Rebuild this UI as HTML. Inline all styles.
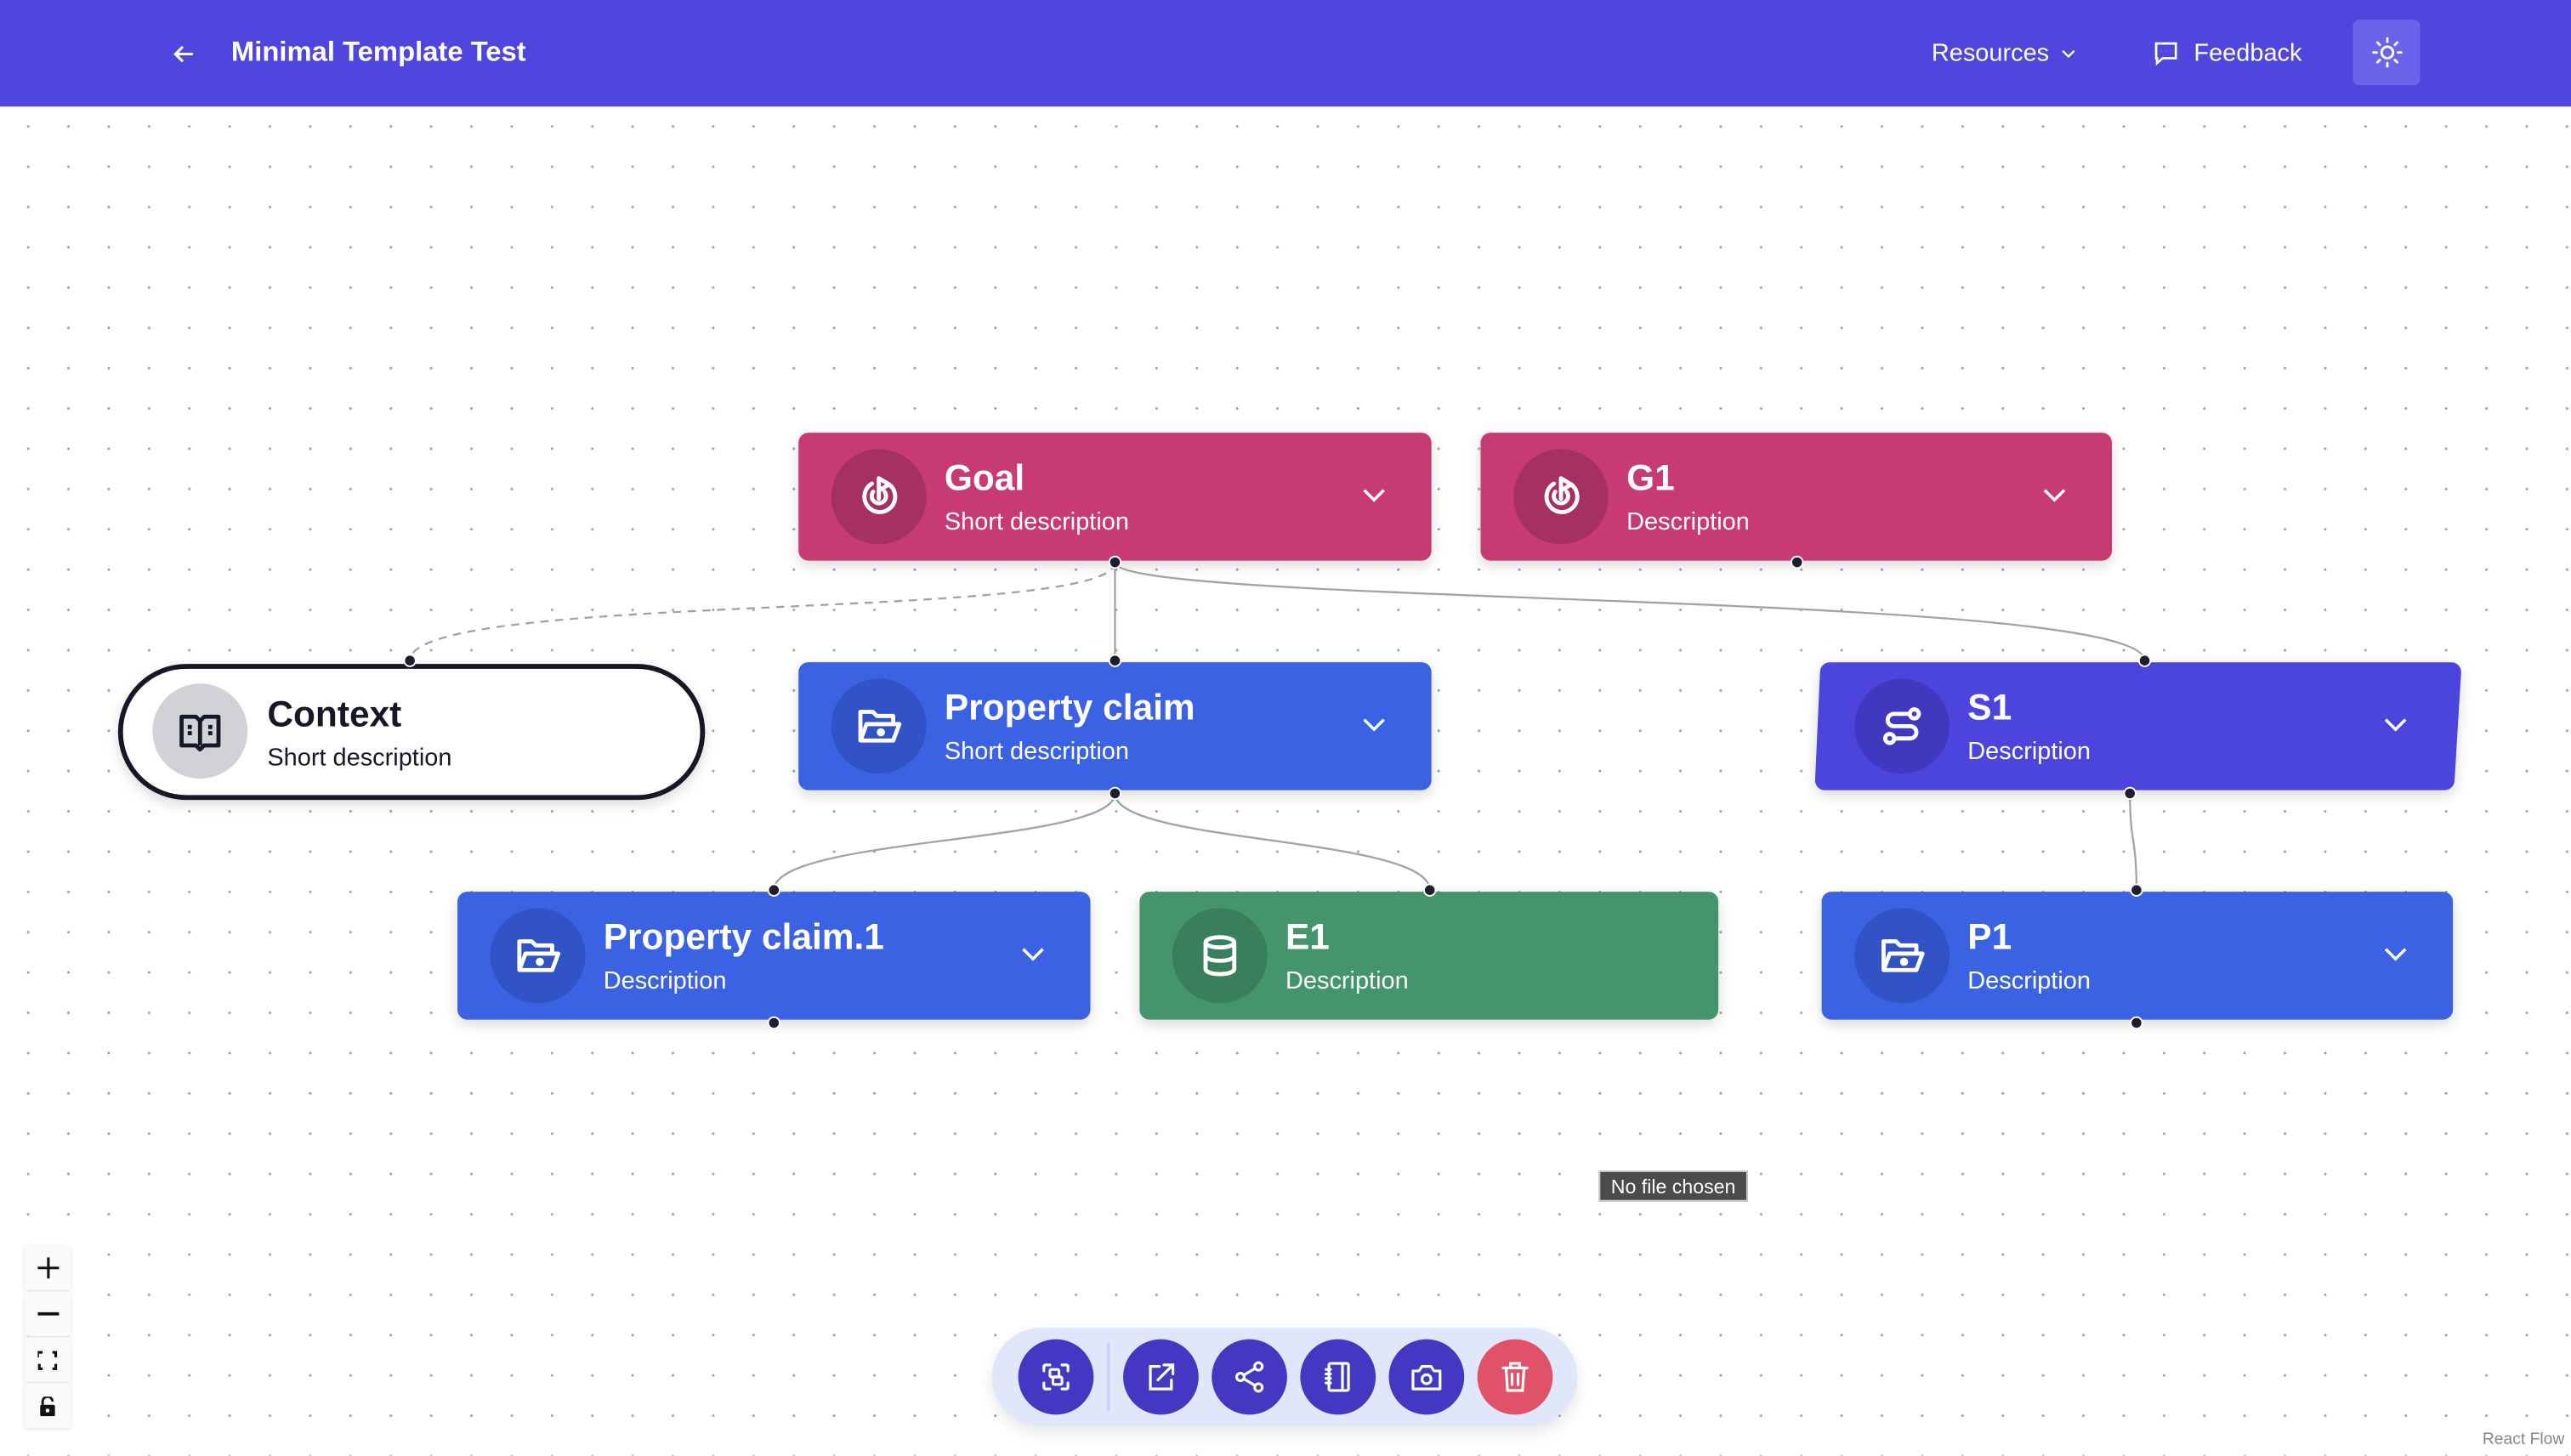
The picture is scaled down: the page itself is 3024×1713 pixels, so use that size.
<!DOCTYPE html>
<html><head><meta charset="utf-8"><style>
html,body{margin:0;padding:0;width:3024px;height:1712px;overflow:hidden;background:#fff;font-family:"Liberation Sans",sans-serif}
#w{position:absolute;left:0;top:0;width:1568px;height:888px;transform:scale(1.928571);transform-origin:0 0;overflow:hidden;
background-color:#fff;background-image:radial-gradient(circle,#9ca3af 0.7px,transparent 0.9px);background-size:24.58px 24.58px;background-position:4.9px -8.9px}
.hdr{position:absolute;left:0;top:0;width:1568px;height:65px;background:#4f46dd;color:#fff}
.hdr .t{position:absolute;top:22px;font-size:17px;font-weight:bold}
.hdr .m{position:absolute;top:24px;font-size:15px}
.node{position:absolute;height:78px;border-radius:6px;color:#fff;box-shadow:0 3px 8px rgba(0,0,0,.15)}
.ic{position:absolute;left:20px;top:10px;width:58px;height:58px;border-radius:50%;display:flex;align-items:center;justify-content:center}
.nt{position:absolute;left:89px;top:15px;font-size:22px;font-weight:bold}
.nd{position:absolute;left:89px;top:46px;font-size:15px}
.chev{position:absolute;right:28px;top:34px}
.h{position:absolute;width:6px;height:6px;border-radius:50%;background:#1e1e2e;border:1px solid #fff;margin:-4px 0 0 -4px}
.tb{position:absolute;left:605px;top:810px;width:357px;height:60px;border-radius:30px;background:#e0e7fb;box-shadow:0 4px 10px rgba(0,0,0,.1)}
.b{position:absolute;top:7px;width:46px;height:46px;border-radius:50%;background:#4238c2;display:flex;align-items:center;justify-content:center}
.ctl{position:absolute;left:15px;width:28px;height:27px;background:#fafafa;box-shadow:0 1px 3px rgba(0,0,0,.12);display:flex;align-items:center;justify-content:center}
</style></head><body><div id="w">
<div class="hdr">
<svg style="position:absolute;left:104px;top:25px" width="16" height="16" viewBox="0 0 16 16" fill="none" stroke="#fff" stroke-width="1.6" stroke-linecap="round"><path d="M13 8H3M7 4L3 8l4 4"/></svg>
<div class="t" style="left:141px">Minimal Template Test</div>
<div class="m" style="left:1178px">Resources</div>
<svg style="position:absolute;left:1257px;top:30px" width="9" height="6" viewBox="0 0 9 6" fill="none" stroke="#fff" stroke-width="1.2"><path d="M1 1l3.5 3.5L8 1"/></svg>
<svg style="position:absolute;left:1313px;top:24px" width="16" height="16" viewBox="0 0 16 16" fill="none" stroke="#fff" stroke-width="1.4"><path d="M2 2.5h12v9H6l-3.5 3v-3H2z"/><path d="M5 7h.1M8 7h.1M11 7h.1"/></svg>
<div class="m" style="left:1338px">Feedback</div>
<div style="position:absolute;left:1435px;top:12px;width:41px;height:40px;border-radius:4px;background:#6a64ea"></div>
<svg style="position:absolute;left:1446px;top:22px" width="20" height="20" viewBox="0 0 20 20" fill="none" stroke="#fff" stroke-width="1.5" stroke-linecap="round"><circle cx="10" cy="10" r="3.5"/><path d="M10 1.5v2M10 16.5v2M1.5 10h2M16.5 10h2M4 4l1.4 1.4M14.6 14.6L16 16M4 16l1.4-1.4M14.6 5.4L16 4"/></svg>
</div>

<svg style="position:absolute;left:0;top:0" width="1568" height="888" fill="none" stroke="#a3a3a3" stroke-width="1.2">
<path d="M680 343 C680 380,250 360,250 403" stroke-dasharray="5 4"/>
<path d="M680 343 L680 403"/>
<path d="M680 343 C680 370,1308 360,1308 403"/>
<path d="M680 484 C680 515,472 510,472 543"/>
<path d="M680 484 C680 515,872 510,872 543"/>
<path d="M1299 484 C1299 515,1303 510,1303 543"/>
</svg>

<div class="node" style="left:487px;top:264px;width:386px;background:#c83a73">
<div class="ic" style="background:#a43161"><svg width="30" height="30" viewBox="0 0 24 24" fill="none" stroke="#fff" stroke-width="2" stroke-linecap="round" stroke-linejoin="round"><path d="M12 13V3l5 3-5 3"/><path d="M8.6 5.6a7.5 7.5 0 1 0 8.2.3"/><path d="M9.2 9.6a3.5 3.5 0 1 0 5.6 0"/></svg></div>
<div class="nt">Goal</div><div class="nd">Short description</div>
<svg class="chev" width="14" height="9" viewBox="0 0 14 9" fill="none" stroke="#fff" stroke-width="1.8"><path d="M1 1l6 6 6-6"/></svg></div>
<div class="node" style="left:903px;top:264px;width:385px;background:#c83a73">
<div class="ic" style="background:#a43161"><svg width="30" height="30" viewBox="0 0 24 24" fill="none" stroke="#fff" stroke-width="2" stroke-linecap="round" stroke-linejoin="round"><path d="M12 13V3l5 3-5 3"/><path d="M8.6 5.6a7.5 7.5 0 1 0 8.2.3"/><path d="M9.2 9.6a3.5 3.5 0 1 0 5.6 0"/></svg></div>
<div class="nt">G1</div><div class="nd">Description</div>
<svg class="chev" width="14" height="9" viewBox="0 0 14 9" fill="none" stroke="#fff" stroke-width="1.8"><path d="M1 1l6 6 6-6"/></svg></div>
<div class="node" style="left:72px;top:405px;width:352px;height:77px;border:3px solid #161827;border-radius:42px;background:#fff;color:#161827">
<div class="ic" style="background:#d1d2d6;left:18px;top:9px"><svg width="30" height="30" viewBox="0 0 24 24" fill="none" stroke="#161827" stroke-width="2" stroke-linejoin="round"><path d="M3 5h7l2 2 2-2h7v14h-7l-2 2-2-2H3z"/><path d="M12 7v12M6 10h2M6 13h2M16 10h2M16 13h2"/></svg></div>
<div class="nt" style="left:88px;top:15px">Context</div><div class="nd" style="left:88px;top:46px">Short description</div></div>
<div class="node" style="left:487px;top:404px;width:386px;background:#3a62e2">
<div class="ic" style="background:#3253c6"><svg width="30" height="30" viewBox="0 0 24 24" fill="none" stroke="#fff" stroke-width="2" stroke-linejoin="round"><path d="M3 19V5h6l2 2h8v3"/><path d="M3 19l3-8h16l-3 8z"/><circle cx="13" cy="15" r="1" fill="#fff"/></svg></div>
<div class="nt">Property claim</div><div class="nd">Short description</div>
<svg class="chev" width="14" height="9" viewBox="0 0 14 9" fill="none" stroke="#fff" stroke-width="1.8"><path d="M1 1l6 6 6-6"/></svg></div>
<svg style="position:absolute;left:1104px;top:404px;filter:drop-shadow(0 3px 4px rgba(0,0,0,.15))" width="400" height="80"><path d="M12 0H391a6 6 0 0 1 6 6L393 72a6 6 0 0 1-6 6H8a6 6 0 0 1-5-6L6 6a6 6 0 0 1 6-6z" fill="#4c45dd"/></svg>
<div class="node" style="left:1111px;top:404px;width:385px;background:transparent;box-shadow:none">
<div class="ic" style="background:#4039c0"><svg width="30" height="30" viewBox="0 0 24 24" fill="none" stroke="#fff" stroke-width="2" stroke-linecap="round"><circle cx="6" cy="18" r="2.2"/><circle cx="18" cy="6" r="2.2"/><path d="M15.8 6H8a3 3 0 0 0 0 6h8a3 3 0 0 1 0 6H8.2"/></svg></div>
<div class="nt">S1</div><div class="nd">Description</div>
<svg class="chev" width="14" height="9" viewBox="0 0 14 9" fill="none" stroke="#fff" stroke-width="1.8"><path d="M1 1l6 6 6-6"/></svg></div>
<div class="node" style="left:279px;top:544px;width:386px;background:#3a62e2">
<div class="ic" style="background:#3253c6"><svg width="30" height="30" viewBox="0 0 24 24" fill="none" stroke="#fff" stroke-width="2" stroke-linejoin="round"><path d="M3 19V5h6l2 2h8v3"/><path d="M3 19l3-8h16l-3 8z"/><circle cx="13" cy="15" r="1" fill="#fff"/></svg></div>
<div class="nt">Property claim.1</div><div class="nd">Description</div>
<svg class="chev" width="14" height="9" viewBox="0 0 14 9" fill="none" stroke="#fff" stroke-width="1.8"><path d="M1 1l6 6 6-6"/></svg></div>
<div class="node" style="left:695px;top:544px;width:353px;background:#44956b">
<div class="ic" style="background:#3a7f5c"><svg width="30" height="30" viewBox="0 0 24 24" fill="none" stroke="#fff" stroke-width="2"><ellipse cx="12" cy="5.5" rx="7" ry="2.5"/><path d="M5 5.5v13c0 1.4 3.1 2.5 7 2.5s7-1.1 7-2.5v-13M5 12c0 1.4 3.1 2.5 7 2.5s7-1.1 7-2.5"/></svg></div>
<div class="nt">E1</div><div class="nd">Description</div></div>
<div class="node" style="left:1111px;top:544px;width:385px;background:#3a62e2">
<div class="ic" style="background:#3253c6"><svg width="30" height="30" viewBox="0 0 24 24" fill="none" stroke="#fff" stroke-width="2" stroke-linejoin="round"><path d="M3 19V5h6l2 2h8v3"/><path d="M3 19l3-8h16l-3 8z"/><circle cx="13" cy="15" r="1" fill="#fff"/></svg></div>
<div class="nt">P1</div><div class="nd">Description</div>
<svg class="chev" width="14" height="9" viewBox="0 0 14 9" fill="none" stroke="#fff" stroke-width="1.8"><path d="M1 1l6 6 6-6"/></svg></div>

<div class="h" style="left:680px;top:343px"></div><div class="h" style="left:1096px;top:343px"></div>
<div class="h" style="left:250px;top:403px"></div><div class="h" style="left:680px;top:403px"></div><div class="h" style="left:1308px;top:403px"></div>
<div class="h" style="left:680px;top:484px"></div><div class="h" style="left:1299px;top:484px"></div>
<div class="h" style="left:472px;top:543px"></div><div class="h" style="left:872px;top:543px"></div><div class="h" style="left:1303px;top:543px"></div>
<div class="h" style="left:472px;top:624px"></div><div class="h" style="left:1303px;top:624px"></div>

<div style="position:absolute;left:975px;top:714px;width:91px;height:19px;background:#4b4b4b;color:#fff;font-size:12px;line-height:19px;text-align:center;border:1px solid #ccc;box-sizing:border-box">No file chosen</div>

<div class="tb">
<div class="b" style="left:16px"><svg width="22" height="22" viewBox="0 0 24 24" fill="none" stroke="#fff" stroke-width="1.8" stroke-linecap="round"><path d="M4 8V5a1 1 0 0 1 1-1h3M16 4h3a1 1 0 0 1 1 1v3M20 16v3a1 1 0 0 1-1 1h-3M8 20H5a1 1 0 0 1-1-1v-3"/><rect x="8" y="7" width="6" height="5" rx="1"/><rect x="10" y="12" width="6" height="5" rx="1"/></svg></div>
<div style="position:absolute;left:70px;top:9px;width:2px;height:42px;background:#c7d2fb"></div>
<div class="b" style="left:80px"><svg width="22" height="22" viewBox="0 0 24 24" fill="none" stroke="#fff" stroke-width="1.8" stroke-linecap="round"><path d="M11 5H5v15h14v-6"/><path d="M10 14L20 4M14 4h6v6"/></svg></div>
<div class="b" style="left:134px"><svg width="22" height="22" viewBox="0 0 24 24" fill="none" stroke="#fff" stroke-width="1.8"><circle cx="18" cy="5" r="2.5"/><circle cx="6" cy="12" r="2.5"/><circle cx="18" cy="19" r="2.5"/><path d="M8.2 10.8l7.6-4.5M8.2 13.2l7.6 4.5"/></svg></div>
<div class="b" style="left:188px"><svg width="22" height="22" viewBox="0 0 24 24" fill="none" stroke="#fff" stroke-width="1.8" stroke-linecap="round"><rect x="6" y="3" width="13" height="18" rx="1"/><path d="M15 3v18M4 7h3M4 10h3M4 13h3M4 16h3"/></svg></div>
<div class="b" style="left:242px"><svg width="22" height="22" viewBox="0 0 24 24" fill="none" stroke="#fff" stroke-width="1.8" stroke-linejoin="round"><path d="M3 8h4l2-3h6l2 3h4v12H3z"/><circle cx="12" cy="13.5" r="3"/></svg></div>
<div class="b" style="left:296px;background:#e05267"><svg width="22" height="22" viewBox="0 0 24 24" fill="none" stroke="#fff" stroke-width="1.8" stroke-linecap="round"><path d="M4 6h16M9 6V3h6v3M6 6l1 15h10l1-15M10 10v7M14 10v7"/></svg></div>
</div>

<div class="ctl" style="top:760px"><svg width="13" height="13" viewBox="0 0 13 13" stroke="#111" stroke-width="1.6"><path d="M6.5 0v13M0 6.5h13"/></svg></div>
<div class="ctl" style="top:788px"><svg width="13" height="3" viewBox="0 0 13 3" stroke="#111" stroke-width="2"><path d="M0 1.5h13"/></svg></div>
<div class="ctl" style="top:816px"><svg width="12" height="12" viewBox="0 0 12 12" fill="none" stroke="#111" stroke-width="1.6"><path d="M0 4V1h3M9 1h2v3M11 8v3H9M3 11H1V8"/></svg></div>
<div class="ctl" style="top:844px"><svg width="10" height="12" viewBox="0 0 10 12"><path d="M2 5V3a3 3 0 0 1 6 0" fill="none" stroke="#111" stroke-width="1.5"/><rect x="0.5" y="5" width="9" height="7" rx="1" fill="#111"/><circle cx="5" cy="8.5" r="1.2" fill="#fff"/></svg></div>

<div style="position:absolute;right:4px;bottom:4px;font-size:10px;color:#888;background:rgba(255,255,255,.6)">React Flow</div>
</div></body></html>
